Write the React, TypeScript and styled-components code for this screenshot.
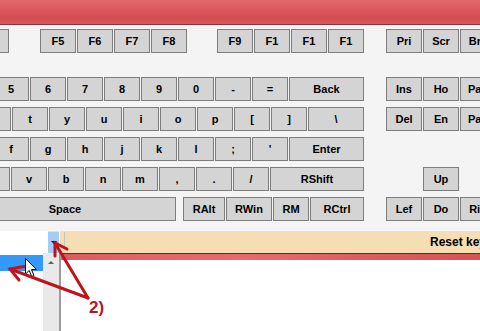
import React from 'react';
import styled, { createGlobalStyle } from 'styled-components';

const GlobalStyle = createGlobalStyle`
  html, body {
    margin: 0;
    padding: 0;
    background: #ffffff;
    overflow: hidden;
  }
`;

const Screen = styled.div`
  position: relative;
  width: 480px;
  height: 331px;
  overflow: hidden;
  background: #ffffff;
  font-family: 'Liberation Sans', Arial, sans-serif;
  color: #000;
`;

const TitleBar = styled.div`
  height: 24px;
  background: linear-gradient(180deg, #e2686c 0%, #d9575c 45%, #d24c51 75%, #db595d 100%);
  border-bottom: 1px solid #8a3438;
`;

const KeyboardPanel = styled.div`
  display: flex;
  gap: 22px;
  padding: 4px 0 10px;
  background: #f4f4f4;
`;

const KeyBlock = styled.div<{ $w: number; $shift?: number }>`
  flex: none;
  width: ${p => p.$w}px;
  margin-left: ${p => p.$shift ?? 0}px;
  display: flex;
  flex-direction: column;
  gap: 6px;
`;

const KeyRow = styled.div<{ $first?: boolean }>`
  display: flex;
  gap: 1px;
  height: 24px;
  margin-bottom: ${p => (p.$first ? '18px' : '0')};
`;

const Key = styled.div<{ $w?: number; $grow?: boolean }>`
  box-sizing: border-box;
  flex: ${p => (p.$grow ? '1 1 auto' : `0 0 ${p.$w ?? 36}px`)};
  height: 24px;
  display: flex;
  align-items: center;
  justify-content: center;
  background: #d4d4d4;
  border: 1px solid #7d7d7d;
  font-size: 11px;
  font-weight: bold;
  white-space: nowrap;
  overflow: hidden;
`;

const KeyGap = styled.div<{ $w: number }>`
  flex: 0 0 ${p => p.$w}px;
`;

const BottomArea = styled.div`
  position: relative;
  height: 100px;
`;

const StatusBar = styled.div`
  display: flex;
  height: 22px;
  background: #f5deb3;
  border-bottom: 1px solid #5e2a2c;
  overflow: hidden;
`;

const ComboField = styled.div`
  flex: 0 0 48px;
  background: #ffffff;
`;

const ComboButton = styled.div`
  flex: 0 0 11px;
  margin-top: 1px;
  background: #a3cdf6;
  display: flex;
  align-items: center;
  justify-content: center;
  &::after {
    content: '';
    border-left: 3px solid transparent;
    border-right: 3px solid transparent;
    border-top: 3px solid #000;
  }
`;

const ComboEdge = styled.div`
  flex: 0 0 1px;
  background: #ffffff;
`;

const Splitter = styled.div`
  flex: 0 0 1px;
  margin: 1px 0 6px 4px;
  background: #cdc3b1;
`;

const ResetLabel = styled.div`
  flex: none;
  margin-left: 365px;
  align-self: center;
  font-size: 12px;
  font-weight: bold;
  white-space: nowrap;
`;

const RedStripe = styled.div`
  height: 6px;
  background: linear-gradient(90deg, #d8565a 0%, #e06468 30%, #e46d70 50%, #dc5d61 75%, #d65458 100%);
`;

const DropList = styled.div`
  position: absolute;
  left: 0;
  top: 22px;
  bottom: 0;
  width: 61px;
  display: flex;
  background: #ffffff;
`;

const ListItems = styled.div`
  flex: 0 0 43px;
  padding-top: 2px;
`;

const SelectedItem = styled.div`
  height: 16px;
  background: #3399ff;
`;

const ScrollBar = styled.div`
  flex: 0 0 16px;
  background: #e9e9e9;
  border-right: 2px solid #9c9c9c;
  display: flex;
  justify-content: center;
  &::before {
    content: '';
    margin-top: 8px;
    height: 0;
    border-left: 3px solid transparent;
    border-right: 3px solid transparent;
    border-bottom: 3px solid #606060;
  }
`;

const Cursor = styled.svg`
  position: absolute;
  left: 25px;
  top: 258px;
`;

const Annotation = styled.svg`
  position: absolute;
  left: 0;
  top: 0;
  pointer-events: none;
`;

const Callout = styled.div`
  position: absolute;
  left: 89px;
  top: 299px;
  font-size: 17px;
  line-height: 1;
  font-weight: bold;
  color: #c0141c;
`;

type Cell = { l?: string; w?: number; grow?: boolean; gap?: number };

const k = (l: string, w?: number): Cell => ({ l, w });
const keys = (ls: string[]): Cell[] => ls.map(l => ({ l }));
const grow = (l: string): Cell => ({ l, grow: true });
const gap = (w: number): Cell => ({ gap: w });

const mainRows: Cell[][] = [
  [k('Esc'), gap(16), ...keys(['F1', 'F2', 'F3', 'F4']), gap(29), ...keys(['F5', 'F6', 'F7', 'F8']), gap(28), ...keys(['F9', 'F1', 'F1', 'F1'])],
  [...keys(['`', '1', '2', '3', '4', '5', '6', '7', '8', '9', '0', '-', '=']), grow('Back')],
  [k('Tab', 55), ...keys(['q', 'w', 'e', 'r', 't', 'y', 'u', 'i', 'o', 'p', '[', ']']), grow('\\')],
  [k('Caps', 73), ...keys(['a', 's', 'd', 'f', 'g', 'h', 'j', 'k', 'l', ';', "'"]), grow('Enter')],
  [k('LShift', 91), ...keys(['z', 'x', 'c', 'v', 'b', 'n', 'm', ',', '.', '/']), grow('RShift')],
  [k('LCtrl', 48), k('LWin', 47), k('LAlt', 48), k('Space', 222), gap(5), k('RAlt', 42), k('RWin', 46), k('RM'), grow('RCtrl')],
];

const navRows: Cell[][] = [
  keys(['Pri', 'Scr', 'Bre']),
  keys(['Ins', 'Ho', 'Pag']),
  keys(['Del', 'En', 'Pag']),
  [],
  [gap(36), k('Up')],
  keys(['Lef', 'Do', 'Rig']),
];

const renderRows = (rows: Cell[][]) =>
  rows.map((row, i) => (
    <KeyRow key={i} $first={i === 0}>
      {row.map((c, j) =>
        c.gap !== undefined ? (
          <KeyGap key={j} $w={c.gap} />
        ) : (
          <Key key={j} $w={c.w} $grow={c.grow}>
            {c.l}
          </Key>
        )
      )}
    </KeyRow>
  ));

const App: React.FC = () => {
  return (
    <Screen>
      <GlobalStyle />
      <TitleBar />
      <KeyboardPanel>
        <KeyBlock $w={556} $shift={-192}>{renderRows(mainRows)}</KeyBlock>
        <KeyBlock $w={110}>{renderRows(navRows)}</KeyBlock>
      </KeyboardPanel>
      <BottomArea>
        <StatusBar>
          <ComboField />
          <ComboButton />
          <ComboEdge />
          <Splitter />
          <ResetLabel>Reset keyboard</ResetLabel>
        </StatusBar>
        <RedStripe />
        <DropList>
          <ListItems>
            <SelectedItem />
          </ListItems>
          <ScrollBar />
        </DropList>
      </BottomArea>
      <Cursor width="13" height="20" viewBox="0 0 13 20">
        <path d="M0.5 0.5 L0.5 16 L4.2 12.5 L6.8 18.6 L9 17.6 L6.5 11.6 L11.5 11.6 Z" fill="#ffffff" stroke="#000000" strokeWidth="1" strokeLinejoin="miter" />
      </Cursor>
      <Annotation width="480" height="331" viewBox="0 0 480 331">
        <g stroke="#c0141c" strokeWidth="3" strokeLinecap="round" fill="none">
          <line x1="88" y1="298" x2="10" y2="269" />
          <polyline points="24,266.5 10,269 19,280" />
          <line x1="88" y1="298" x2="55" y2="243" />
          <polyline points="67,249 55,243 55,256" />
        </g>
      </Annotation>
      <Callout>2)</Callout>
    </Screen>
  );
};

export default App;
